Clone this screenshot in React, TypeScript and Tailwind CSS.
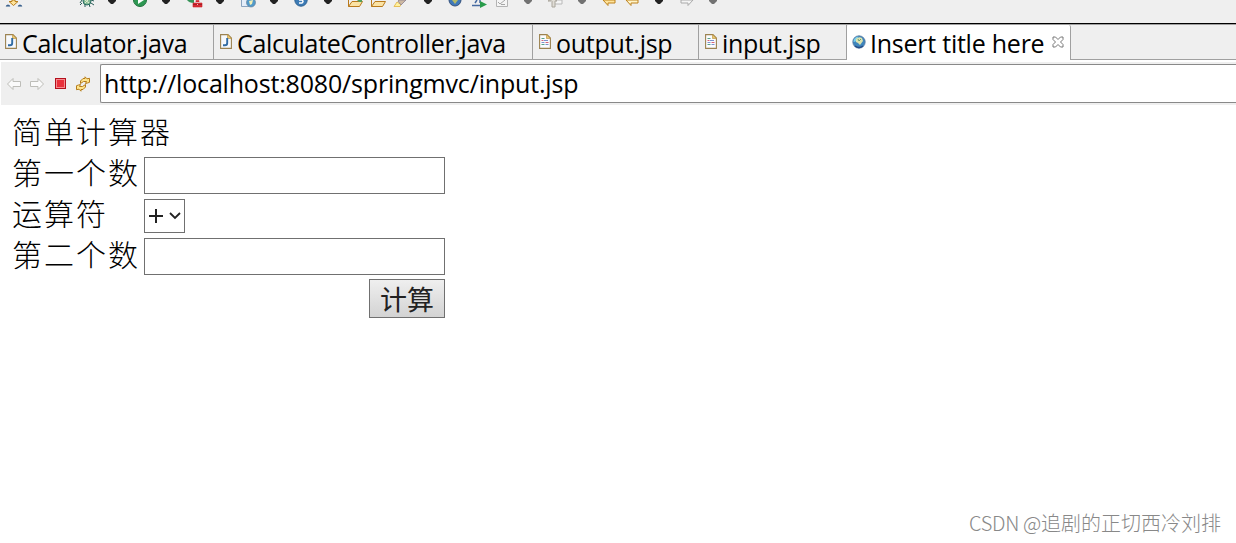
import React from "react";
import type { FC } from "react";

type Props = {
    children?: React.ReactNode
};

type TabProps = {
    icon: React.ReactNode
    title: string
    className: string
    textClass: string
};

const Tool: FC<Props & { className: string }> = ({ children, className }) => (
    <svg className={`w-[18px] h-2 shrink-0 ${className}`} viewBox="0 0 18 8" fill="none">
        {children}
    </svg>
);

const Caret: FC<{ className: string, color?: string }> = ({ className, color = "#222" }) => (
    <svg className={`w-[10px] h-2 shrink-0 ${className}`} viewBox="0 0 10 8">
        <path d="M1 0h8v1L6 4H4L1 1z" fill={color} />
    </svg>
);

const Folder: FC = () => (
    <path d="M2.5 0v6.500h11L16.500 1.500H6L2.500 6.500" fill="#fbe3a4" stroke="#b97a1c" />
);

const Globe: FC = () => (
    <svg className="w-[14px] h-[14px] shrink-0" viewBox="0 0 14 14">
        <circle cx="7" cy="7" r="6.2" fill="#3f86bd" stroke="#5577a0" strokeWidth=".8" />
        <path d="M1.500 7q0-5 5-5.500l-3 5z" fill="#7ed0ea" />
        <path d="M4 4q3-3 6-1l1 3-3 4-2-2-2-1z" fill="#dce3b0" />
        <path d="M6 4l1 2 2-2" stroke="#6d9e74" fill="none" />
        <path d="M3 11q4 3 8 0" stroke="#274b86" strokeWidth="1.500" fill="none" />
    </svg>
);

const JavaFile: FC = () => (
    <svg className="w-3 h-[15px] shrink-0 -mt-[2px]" viewBox="0 0 12 15">
        <path d="M.6.6h7.400l3.400 3.400v10.400H.6z" fill="#f6f9fd" stroke="#9b8250" strokeWidth="1.100" />
        <path d="M7.500.5v4h4z" fill="#e8c66c" stroke="#b68b3b" strokeWidth=".6" />
        <path d="M7.200 4v5q0 2.300-2.200 2.300H3" fill="none" stroke="#316ba3" strokeWidth="1.900" />
    </svg>
);

const JspFile: FC = () => (
    <svg className="w-3 h-[15px] shrink-0 -mt-[2px]" viewBox="0 0 12 15">
        <path d="M.6.6h7.400l3.400 3.400v10.400H.6z" fill="#fbfcff" stroke="#9b8250" strokeWidth="1.100" />
        <path d="M7.500.5v4h4z" fill="#e8c66c" stroke="#b68b3b" strokeWidth=".6" />
        <path d="M2.500 4.500h3M2.500 10.500h3" stroke="#58a287" />
        <path d="M2.500 6.500h2M6.500 8.500h3" stroke="#d56478" />
        <path d="M5 6.500h4M2.500 8.500h3M6.500 10.500h3" stroke="#7b92cc" />
    </svg>
);

const Toolbar: FC = () => (
    <div className="flex items-start h-[23px] bg-[#efefef] overflow-hidden">
        <Tool className="ml-[5px]">
            <path d="M7 0h3v1.500h3L8.500 5.500 4 1.500h3z" fill="#ffe39a" stroke="#b9801d" />
            <path d="M1 6.200h4l-1-1.200H2zM13 6.200h4l-1-1.200h-2z" fill="#3d638f" stroke="#3d638f" strokeWidth=".6" />
        </Tool>
        <Tool className="ml-[55px]">
            <path d="M4 0L2 3M13 0l3 1M4 3L2 5M13 3l3 2M7 4v3M11 4l1 3" stroke="#285b57" />
            <ellipse cx="9" cy="1" rx="4" ry="4" fill="#83b995" stroke="#286b60" />
            <path d="M7 0l4 3M10 0l-3 3" stroke="#e0efce" />
        </Tool>
        <Caret className="ml-[11px]" />
        <Tool className="ml-[14px]">
            <circle cx="9" cy="0" r="6.500" fill="#2e9853" stroke="#23723d" />
            <path d="M7 0h6L7 4z" fill="#fff" />
        </Tool>
        <Caret className="ml-3" />
        <Tool className="ml-[14px]">
            <path d="M2 0h7v3Q4 3 2 0z" fill="#379459" />
            <path d="M8 3h9v4H8zM11 2V.5h3V2" fill="#d82c32" stroke="#c9242b" strokeWidth=".6" />
            <path d="M8 4.500h9" stroke="#8f1b22" strokeWidth=".7" />
            <path d="M12 4h1v1h-1z" fill="#ffb8b8" />
        </Tool>
        <Caret className="ml-3" />
        <Tool className="ml-[14px]">
            <path d="M2.500 0v6.500H10V0" fill="#e4edf9" stroke="#8aa3bf" />
            <circle cx="12" cy="2.500" r="4.500" fill="#519aca" stroke="#6b8299" strokeWidth=".7" />
            <path d="M10 1l4-1-1 4-2 1z" fill="#f3efb5" />
        </Tool>
        <Caret className="ml-3" />
        <Tool className="ml-[13px]">
            <circle cx="9" cy="0" r="6.200" fill="#3c7bb5" stroke="#2c6192" />
            <path d="M7 0h3q2 1.500 0 3H7" stroke="#fff" strokeWidth="1.500" />
        </Tool>
        <Caret className="ml-[13px]" />
        <Tool className="ml-[13px]">
            <Folder />
            <path d="M11 0h5v2h-3z" fill="#559f5a" />
        </Tool>
        <Tool className="ml-[5px]"><Folder /></Tool>
        <Tool className="ml-[5px]">
            <path d="M2 6.500L5 2l4 2.500-1 2z" fill="#fff2a0" stroke="#e2b23d" strokeWidth=".8" />
            <path d="M6 1l1-1h7L9 5z" fill="#cdb9a2" stroke="#8b8092" strokeWidth=".8" />
        </Tool>
        <Caret className="ml-[13px]" />
        <Tool className="ml-[13px]">
            <circle cx="9" cy="0" r="6" fill="#3f78ba" stroke="#36527b" />
            <path d="M6 0h6l-3 4z" fill="#b3b968" />
        </Tool>
        <Tool className="ml-[6px]">
            <path d="M7 0L5 3M10 0v3M2 5.500h8" stroke="#456aa1" strokeWidth="1.500" />
            <path d="M10 1l7 3.500-7 3.500z" fill="#299c4b" />
        </Tool>
        <Tool className="ml-[5px]">
            <path d="M3.500 0v6.500h11V0" fill="#f5f5f5" stroke="#b3b3b3" />
            <path d="M5 2l2 2 5-4M8 4.500h4" stroke="#a6a6a6" />
        </Tool>
        <Caret className="ml-3" color="#727272" />
        <Tool className="ml-[13px]">
            <path d="M8 0h8v4H9" fill="#f5f5f5" stroke="#b9b9b9" />
            <path d="M5 0v1H2l5-3 4 3H9v6H6V1" fill="#e0ddd6" stroke="#aaa69c" />
        </Tool>
        <Caret className="ml-[13px]" color="#727272" />
        <Tool className="ml-[13px]">
            <path d="M3 0l5 5.500V3h7V0z" fill="#ffe49b" stroke="#be821c" />
        </Tool>
        <Tool className="ml-[5px]">
            <path d="M3 0l5 5.500V3h7V0z" fill="#fff4c8" stroke="#be821c" />
        </Tool>
        <Caret className="ml-[13px]" />
        <Tool className="ml-[14px]">
            <path d="M15 0l-5 5.500V3H3V0z" fill="#f4f4f4" stroke="#aaa" />
        </Tool>
        <Caret className="ml-3" color="#727272" />
    </div>
);

const Tab: FC<TabProps> = ({ icon, title, className, textClass }) => (
    <div className={`flex items-center h-[35px] border-r border-b border-[#a0a0a0] shrink-0 ${className}`}>
        {icon}
        <span className={`whitespace-nowrap h-[34px] leading-[36px] ${textClass}`}>{title}</span>
    </div>
);

const Tabs: FC = () => (
    <div className="flex h-[37px] border-t border-black bg-[#efefef] text-[25px]">
        <div className="flex w-full border-t border-[#a0a0a0]">
            <Tab icon={<JavaFile />} title="Calculator.java" className="w-[214px] pl-[5px]" textClass="ml-[5px] tracking-[-0.37px]" />
            <Tab icon={<JavaFile />} title="CalculateController.java" className="w-[319px] pl-[6px]" textClass="ml-[5px] tracking-[-0.33px]" />
            <Tab icon={<JspFile />} title="output.jsp" className="w-[166px] pl-[6px]" textClass="ml-[5px] tracking-[-0.25px]" />
            <Tab icon={<JspFile />} title="input.jsp" className="w-[148px] pl-[6px]" textClass="ml-[5px] tracking-[-0.3px]" />
            <div className="flex items-center w-[224px] h-[35px] shrink-0 bg-white border-r border-[#a0a0a0] rounded-t-[2px] pl-[5px] pb-px">
                <Globe />
                <span className="ml-1 whitespace-nowrap h-[34px] leading-[36px] w-[176px] tracking-[-0.24px]">Insert title here</span>
                <svg className="w-3 h-3 ml-[6px] shrink-0" viewBox="0 0 12 12" fill="none" stroke="#777">
                    <path d="M1 1h2.500L6 3.500 8.500 1H11v2.500L8.500 6 11 8.500V11H8.500L6 8.500 3.500 11H1V8.500L3.500 6 1 3.500z" />
                </svg>
            </div>
            <div className="flex-1 h-[35px] border-b border-[#a0a0a0]"></div>
        </div>
    </div>
);

const AddressBar: FC = () => (
    <div className="flex mt-[2px] ml-px h-[43px] bg-[#efefef] pt-[2px]">
        <div className="flex items-center w-[99px] h-[39px] pl-[5px]">
            <svg className="w-4 h-[14px]" viewBox="0 0 16 14" fill="#fafafa" stroke="#bdbdb8">
                <path d="M1.500 7L7 1.500v3h7.500v5H7v3z" />
            </svg>
            <svg className="w-4 h-[14px] ml-[7px]" viewBox="0 0 16 14" fill="#fafafa" stroke="#bdbdb8">
                <path d="M14.500 7L9 1.500v3H1.500v5H9v3z" />
            </svg>
            <div className="w-[11px] h-[11px] ml-[10px] border border-[#b4101c] bg-[#e9303b] shadow-[inset_0_0_0_1px_#f58b90]"></div>
            <svg className="w-4 h-4 ml-[9px]" viewBox="0 0 16 16" fill="#ffe58c" stroke="#b57c1c">
                <path d="M5.500 7.500V5L8 2.500h2V.8l2 2 2.500-.5v4L12.500 7l-2 .5 1-2H8.500z" />
                <path d="M10.500 8.500V11L8 13.500H6v1.700l-2-2-2.500.5v-4L3.500 9l2-.5-1 2h3z" />
            </svg>
        </div>
        <div className="flex-1 h-[39px] bg-white border border-r-0 border-[#898989] rounded-l-[2px] pl-[3px] text-[25px] leading-[36px] whitespace-nowrap">
            <span className="tracking-[-0.18px]">http://localhost:8080/springmvc/input.jsp</span>
        </div>
    </div>
);

const Field: FC<Props & { label: string }> = ({ label, children }) => (
    <div className="flex items-start h-[41px]">
        <label className="w-[132px] h-[41px] leading-[28px] whitespace-nowrap">{label}</label>
        {children}
    </div>
);

const Calculator: FC = () => (
    <form className="w-[445px] pl-3 pt-[7px] text-[30px] tracking-[2px] font-light font-['Noto_Sans_CJK_SC',sans-serif]">
        <h1 className="h-[45px] leading-[37px]">简单计算器</h1>
        <Field label="第一个数">
            <input className="w-[301px] h-[37px] border border-[#707070] text-[26px] px-1" />
        </Field>
        <Field label="运算符">
            <div className="flex items-center w-[41px] h-[34px] mt-px border border-[#707070] pl-[4px]">
                <svg className="w-[14px] h-[14px]" viewBox="0 0 14 14" stroke="#222" strokeWidth="2">
                    <path d="M0 7h14M7 0v14" />
                </svg>
                <svg className="w-3 h-2 ml-[6px]" viewBox="0 0 12 8" fill="none" stroke="#222" strokeWidth="1.800">
                    <path d="M1 1l5 5 5-5" />
                </svg>
            </div>
        </Field>
        <Field label="第二个数">
            <input className="w-[301px] h-[37px] -mt-px border border-[#707070] text-[26px] px-1" />
        </Field>
        <div className="flex justify-end -mt-px">
            <button type="button" className="w-[76px] h-[39px] border border-[#707070] bg-linear-to-b from-[#efefef] to-[#d3d3d3] text-[27px] leading-[37px] tracking-normal font-normal text-[#222]">计算</button>
        </div>
    </form>
);

export default function App() {
    return (
        <div className="flex flex-col w-full h-[543px] overflow-hidden bg-white text-black font-['Open_Sans',sans-serif]">
            <Toolbar />
            <Tabs />
            <AddressBar />
            <Calculator />
            <footer className="mt-auto mb-[5px] mr-[15px] text-right text-[20px] leading-[30px] font-light text-[#888] font-['Noto_Sans_CJK_SC',sans-serif]">
                <span className="tracking-[-0.3px]">CSDN @</span>追剧的正切西冷刘排
            </footer>
        </div>
    );
}
